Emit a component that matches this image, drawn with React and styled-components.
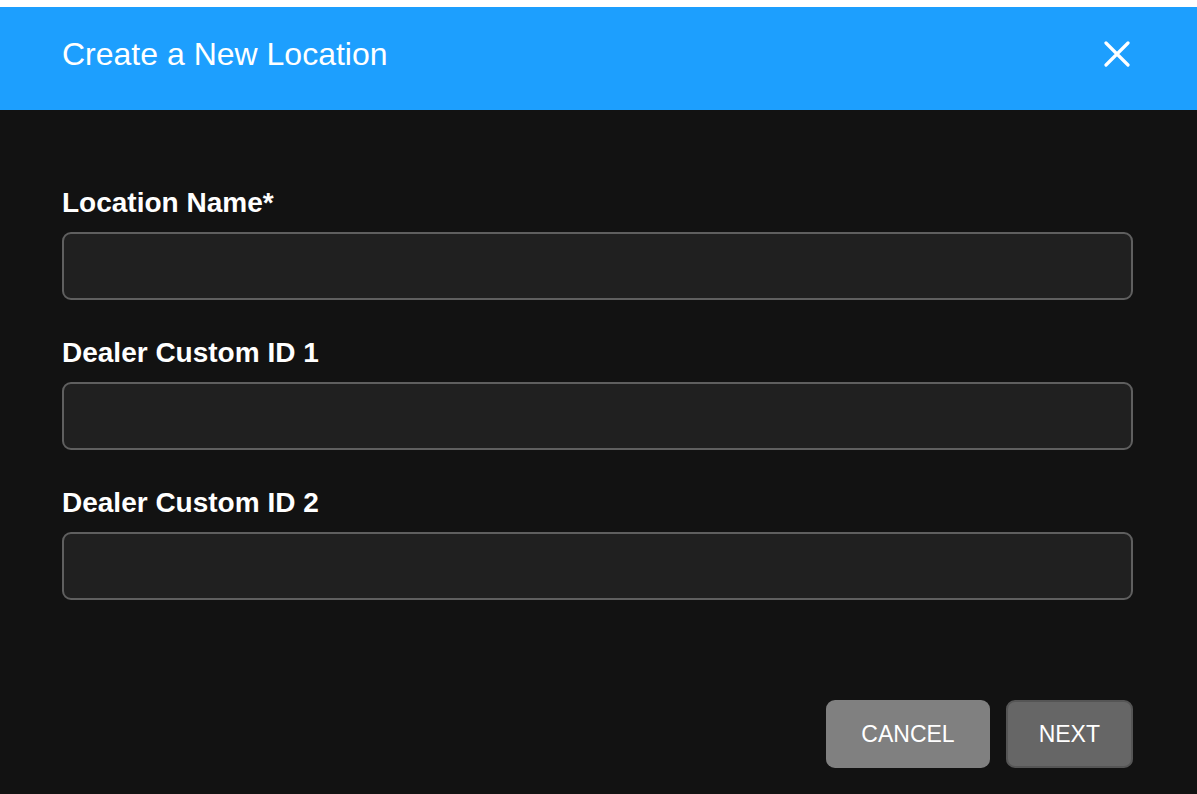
import React from 'react';
import styled, { createGlobalStyle } from 'styled-components';

const GlobalStyle = createGlobalStyle`
  html, body {
    margin: 0;
    padding: 0;
    background: #ffffff;
    font-family: "Liberation Sans", Arial, Helvetica, sans-serif;
  }
  * { box-sizing: border-box; }
`;

const Modal = styled.div`
  margin-top: 7px;
  height: 787px;
  display: flex;
  flex-direction: column;
  background: #121212;
`;

const Header = styled.header`
  height: 103px;
  flex: none;
  display: flex;
  align-items: center;
  justify-content: space-between;
  padding: 0 67px 10px 62px;
  background: #1d9ffe;
`;

const Title = styled.h2`
  margin: 0;
  font-size: 32px;
  line-height: 38px;
  font-weight: 400;
  color: #ffffff;
`;

const CloseBtn = styled.button`
  display: flex;
  padding: 0;
  border: 0;
  background: none;
  cursor: pointer;
`;

const Form = styled.form`
  flex: 1;
  display: flex;
  flex-direction: column;
  padding: 77px 64px 26px 62px;
`;

const Field = styled.div`
  display: flex;
  flex-direction: column;
  margin-bottom: ${(p) => (p.last ? '0' : '37px')};
`;

const Label = styled.label`
  font-size: 28px;
  line-height: 32px;
  font-weight: 700;
  color: #ffffff;
  margin-bottom: 13px;
`;

const Input = styled.input`
  height: 68px;
  width: 100%;
  border: 2px solid #5f5f5f;
  border-radius: 9px;
  background: #202020;
  color: #ffffff;
  font-family: inherit;
  font-size: 22px;
  padding: 0 16px;
  outline: none;
`;

const Footer = styled.footer`
  margin-top: auto;
  display: flex;
  justify-content: flex-end;
  gap: 16px;
`;

const Button = styled.button`
  height: 68px;
  padding: 0 ${(p) => (p.varient === 'dark' ? '31px' : '35px')};
  border-radius: 9px;
  border: ${(p) => (p.varient === 'dark' ? '2px solid #555555' : '0')};
  background: ${(p) => (p.varient === 'dark' ? '#666666' : '#808080')};
  color: #ffffff;
  font-family: inherit;
  font-size: 23px;
  text-transform: uppercase;
  cursor: pointer;
`;

const fields = [
  { id: 'name', label: 'Location Name*' },
  { id: 'custom1', label: 'Dealer Custom ID 1' },
  { id: 'custom2', label: 'Dealer Custom ID 2' },
];

export default function App() {
  return (
    <>
      <GlobalStyle />
      <Modal>
        <Header>
          <Title>Create a New Location</Title>
          <CloseBtn type="button" aria-label="Close">
            <svg width="26" height="26" viewBox="0 0 26 26">
              <path d="M2 2L24 24M24 2L2 24" stroke="#fff" strokeWidth="3.2" strokeLinecap="round" fill="none" />
            </svg>
          </CloseBtn>
        </Header>
        <Form onSubmit={(e) => e.preventDefault()}>
          {fields.map((f, i) => (
            <Field key={f.id} last={i === fields.length - 1}>
              <Label htmlFor={f.id}>{f.label}</Label>
              <Input id={f.id} type="text" />
            </Field>
          ))}
          <Footer>
            <Button type="button">Cancel</Button>
            <Button type="submit" varient="dark">Next</Button>
          </Footer>
        </Form>
      </Modal>
    </>
  );
}
